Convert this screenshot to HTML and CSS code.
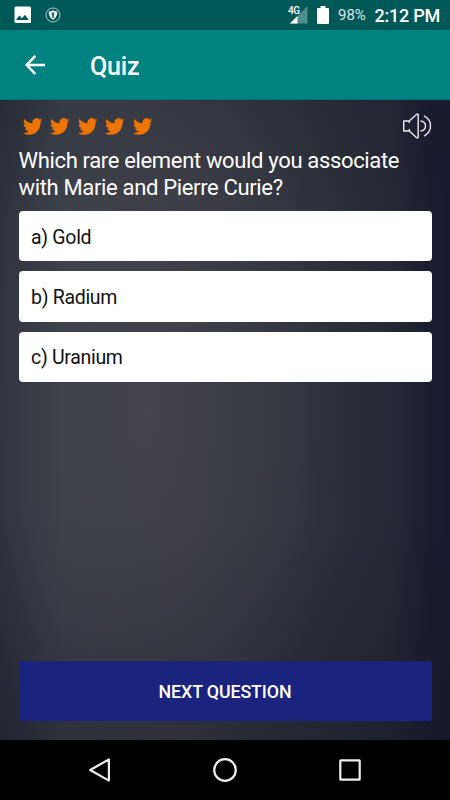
FILE: index.html
```
<!DOCTYPE html>
<html lang="en">
<head>
<meta charset="utf-8">
<title>Quiz</title>
<link rel="stylesheet" href="styles.css">
</head>
<body>
<svg class="defs" width="0" height="0"><defs>
<symbol id="bird" viewBox="0 2 24 20" preserveAspectRatio="none"><path d="M23.953 4.57a10 10 0 01-2.825.775 4.958 4.958 0 002.163-2.723c-.951.555-2.005.959-3.127 1.184a4.92 4.92 0 00-8.384 4.482C7.69 8.095 4.067 6.13 1.64 3.162a4.822 4.822 0 00-.666 2.475c0 1.71.87 3.213 2.188 4.096a4.904 4.904 0 01-2.228-.616v.06a4.923 4.923 0 003.946 4.827 4.996 4.996 0 01-2.212.085 4.936 4.936 0 004.604 3.417 9.867 9.867 0 01-6.102 2.105c-.39 0-.779-.023-1.17-.067a13.995 13.995 0 007.557 2.209c9.053 0 13.998-7.496 13.998-13.985 0-.21 0-.42-.015-.63A9.935 9.935 0 0024 4.59z"/></symbol>
</defs></svg>
<div class="screen">
  <div class="status">
    <svg class="picture" width="18" height="18" viewBox="0 0 18 18"><rect x=".5" y=".5" width="16.5" height="16.5" rx="1.5" fill="#fff"/><path d="M2.5 14v-1l3-3.5L8 12.3 11 8.7l3.8 5.3z" fill="#005957"/></svg>
    <svg class="shield" width="16" height="16" viewBox="0 0 16 16"><circle cx="8" cy="8" r="7" fill="none" stroke="#b0cdcc" stroke-width="1"/><path d="M8 3.2Q10 4.5 12.3 4.4 12.5 10 8 12.8 3.5 10 3.7 4.4 6 4.5 8 3.2z" fill="#fff"/><path d="M8 5.2a1.6 1.6 0 0 1 .9 2.9L8.7 11H7.3L7.1 8.1A1.6 1.6 0 0 1 8 5.2z" fill="#005957"/><circle cx="8" cy="6.7" r=".55" fill="#fff"/></svg>
    <div class="signal"><span class="network">4G</span><svg width="19" height="18" viewBox="0 0 19 18"><path d="M18.500 0v17.500H.8z" fill="#4d8e8c"/><path d="M8.500 10v7.500H.8z" fill="#fff"/></svg></div>
    <svg class="battery" width="12" height="18" viewBox="0 0 12 18"><path d="M3.500 0h5v2H11q1 0 1 1v14q0 1-1 1H1q-1 0-1-1V3q0-1 1-1h2.500z" fill="#fff"/></svg>
    <span class="percent">98%</span>
    <span class="clock">2:12 PM</span>
  </div>
  <header class="appbar">
    <svg width="20" height="20" viewBox="0 0 20 20" fill="none" stroke="#fff" stroke-width="2.5"><path d="M10.300.9 1.700 10l8.600 9M1.700 10H20"/></svg>
    <h1 class="title">Quiz</h1>
  </header>
  <main class="quiz">
    <div class="tools">
      <div class="lives">
        <svg><use href="#bird"/></svg><svg><use href="#bird"/></svg><svg><use href="#bird"/></svg><svg><use href="#bird"/></svg><svg><use href="#bird"/></svg>
      </div>
      <svg class="sound" width="30" height="26" viewBox="0 0 30 26" fill="none" stroke="#e9e9eb" stroke-width="1.4" stroke-linejoin="round" stroke-linecap="round"><path d="M7.300 8H1.700v10h5.600M7.300 8v1.500M7.300 18v-1.500M7.300 8 14.700 1.300q1.500-.9 1.500.7v22q0 1.600-1.500.7L7.300 18M19 8q4.500 1 4.500 5T19 18M22.500 3.200q6 3.300 6 9.800t-6 9.800"/></svg>
    </div>
    <p class="question">Which rare element would you associate<br>with Marie and Pierre Curie?</p>
    <div class="answers">
      <div class="answer">a) Gold</div>
      <div class="answer">b) Radium</div>
      <div class="answer">c) Uranium</div>
    </div>
    <button class="next">NEXT QUESTION</button>
  </main>
  <nav class="navbar">
    <svg width="26" height="26" viewBox="0 0 26 26"><path d="M21.900 2.400v21.200L3.200 13z"/></svg>
    <svg width="26" height="26" viewBox="0 0 26 26"><circle cx="13" cy="13" r="10.8"/></svg>
    <svg width="26" height="26" viewBox="0 0 26 26"><rect x="3.3" y="3.3" width="19.4" height="19.4" rx=".5"/></svg>
  </nav>
</div>
</body>
</html>
```
FILE: styles.css
```
* { box-sizing: border-box; }
body { margin: 0; font-family: Roboto, "Liberation Sans", sans-serif; color: #fff; }
svg { display: block; flex: none; }
.defs { position: absolute; }
.screen { width: 450px; height: 800px; display: flex; flex-direction: column; overflow: hidden; }
.status { height: 30px; background: #005957; display: flex; align-items: center; padding-right: 10px; }
.picture { margin-left: 14px; }
.shield { margin-left: 12.5px; }
.signal { position: relative; margin-left: auto; }
.network { position: absolute; left: -1px; top: 0; font-size: 10px; line-height: 10px; font-weight: 500; letter-spacing: -.5px; }
.battery { margin-left: 9px; }
.percent { margin-left: 9px; width: 28px; font-size: 15px; color: #d8e7e6; white-space: nowrap; }
.clock { margin-left: 8.5px; width: 65.5px; font-size: 18px; font-weight: 500; letter-spacing: -.25px; white-space: nowrap; }
.appbar { height: 70px; background: #008280; border-bottom: 1px solid #007674; display: flex; align-items: center; padding-left: 25px; gap: 45px; }
.title { margin: 4px 0 0; font-size: 25px; font-weight: 500; line-height: 30px; letter-spacing: -.2px; }
.quiz {
  height: 640px; padding: 12.5px 18.5px 19px; display: flex; flex-direction: column;
  background:
    radial-gradient(ellipse 190px 420px at 145px 310px, rgba(80, 73, 83, .5), rgba(80, 73, 83, 0)),
    linear-gradient(180deg, rgba(15, 16, 30, .15), rgba(15, 16, 30, 0) 18%, rgba(15, 16, 30, 0) 65%, rgba(15, 16, 30, .35)),
    linear-gradient(90deg, #2d313c 0, #393f48 14%, #383a45 40%, #30343e 65%, #272a36 86%, #1d1d32 95%, #191a30 100%);
}
.tools { height: 27px; display: flex; justify-content: space-between; align-items: center; }
.lives { display: flex; gap: 8px; margin-left: 4px; }
.lives svg { width: 19.5px; height: 17px; fill: #ee7404; }
.sound { margin-right: -.5px; }
.question { margin: 7px 0 0; font-size: 22px; line-height: 27.5px; letter-spacing: -.34px; white-space: nowrap; }
.answers { display: flex; flex-direction: column; gap: 9.7px; margin-top: 9.3px; }
.answer { height: 50.7px; display: flex; align-items: center; padding: 2px 0 0 12.5px; border-radius: 4px; background: #fff; color: #111; font-size: 19.5px; letter-spacing: -.3px; }
.next { margin: auto 0 0; height: 60px; flex: none; border: 0; border-radius: 3px; background: #1a237e; color: #fff; font: 500 17.8px Roboto, sans-serif; letter-spacing: -.1px; padding: 1px 0 0; }
.navbar { height: 60px; background: #000; display: flex; justify-content: center; align-items: center; gap: 99px; }
.navbar svg { fill: none; stroke: #eee; stroke-width: 2.2; stroke-linejoin: round; }
```
